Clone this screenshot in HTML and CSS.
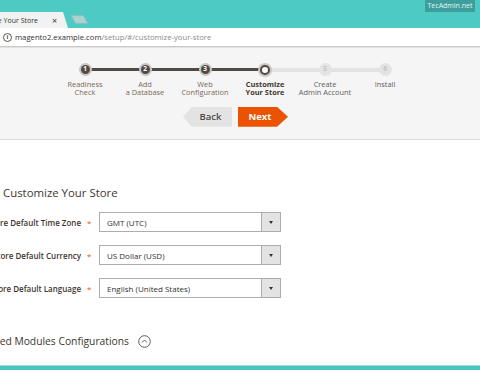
FILE: index.html
```html
<!DOCTYPE html>
<html>
<head>
<meta charset="utf-8">
<link rel="stylesheet" href="styles.css">
</head>
<body>
<div class="tabstrip">
  <div class="tab">
    <div class="tab-title"><span>Customize Your Store</span></div>
    <span class="tab-close">×</span>
  </div>
  <div class="newtab"></div>
  <div class="badge">TecAdmin.net</div>
</div>
<div class="omnibox">
  <span class="info-icon">i</span>
  <span class="url"><span class="host">magento2.example.com</span><span class="path">/setup/#/customize-your-store</span></span>
</div>
<div class="setup-header">
  <ol class="steps">
    <li class="step done"><span class="dot">1</span><span class="label">Readiness<br>Check</span></li>
    <li class="step done"><span class="dot">2</span><span class="label">Add<br>a Database</span></li>
    <li class="step done"><span class="dot">3</span><span class="label">Web<br>Configuration</span></li>
    <li class="step current"><span class="dot"></span><span class="label">Customize<br>Your Store</span></li>
    <li class="step todo"><span class="dot">5</span><span class="label">Create<br>Admin Account</span></li>
    <li class="step todo"><span class="dot">6</span><span class="label">Install</span></li>
  </ol>
  <div class="nav-buttons">
    <button class="btn-back">Back</button>
    <button class="btn-next">Next</button>
  </div>
</div>
<div class="content">
  <h2 class="page-title">Customize Your Store</h2>
  <div class="form-row">
    <div class="label-cell"><span>Store Default Time Zone</span></div>
    <span class="req">*</span>
    <div class="select"><span class="value">GMT (UTC)</span><span class="arrow"></span></div>
  </div>
  <div class="form-row">
    <div class="label-cell"><span>Store Default Currency</span></div>
    <span class="req">*</span>
    <div class="select"><span class="value">US Dollar (USD)</span><span class="arrow"></span></div>
  </div>
  <div class="form-row">
    <div class="label-cell"><span>Store Default Language</span></div>
    <span class="req">*</span>
    <div class="select"><span class="value">English (United States)</span><span class="arrow"></span></div>
  </div>
  <div class="modules">
    <div class="modules-title"><span>Advanced Modules Configurations</span></div>
    <span class="toggle">
      <svg width="13" height="13" viewBox="0 0 13 13"><circle cx="6.5" cy="6.5" r="5.8" fill="none" stroke="#514943" stroke-width="0.9"/><path d="M4 7.5 L6.5 5 L9 7.5" fill="none" stroke="#514943" stroke-width="0.9"/></svg>
    </span>
  </div>
</div>
<div class="footer-bar"></div>
</body>
</html>
```
FILE: styles.css
```css
* { box-sizing: border-box; }
html, body { margin: 0; padding: 0; }
body {
  width: 480px;
  height: 370px;
  overflow: hidden;
  display: flex;
  flex-direction: column;
  font-family: "Open Sans", "Noto Sans", sans-serif;
  background: #fff;
  color: #41362f;
}

/* browser chrome */
.tabstrip {
  position: relative;
  height: 28px;
  flex: none;
  background: #4ecac5;
  display: flex;
  align-items: flex-end;
}
.tab {
  width: 68px;
  height: 16px;
  background: #f2f2f2;
  clip-path: polygon(0 0, 63px 0, 68px 100%, 0 100%);
  display: flex;
  align-items: center;
}
.tab-title {
  width: 38px;
  display: flex;
  justify-content: flex-end;
  overflow: visible;
  white-space: nowrap;
  font-size: 7px;
  color: #333;
}
.tab-close {
  margin-left: 14px;
  font-size: 9px;
  line-height: 1;
  color: #333;
}
.newtab {
  width: 13px;
  height: 9px;
  margin: 0 0 4px 5px;
  background: #a9d4d2;
  border: 1px solid #8bbfbc;
  transform: skewX(29deg);
}
.badge {
  position: absolute;
  top: 0;
  right: 5px;
  width: 50px;
  height: 12px;
  background: #3c9f9b;
  color: #e6f4f3;
  font-size: 7px;
  line-height: 12px;
  text-align: center;
}
.omnibox {
  flex: none;
  height: 19px;
  background: #fff;
  border-bottom: 1px solid #c9c9c9;
  display: flex;
  align-items: center;
  padding-left: 3px;
}
.info-icon {
  width: 9px;
  height: 9px;
  border: 1px solid #555;
  border-radius: 50%;
  font-size: 6px;
  line-height: 7px;
  text-align: center;
  color: #444;
  font-weight: 700;
}
.url {
  margin-left: 3px;
  font-size: 7.7px;
  white-space: nowrap;
}
.host { color: #333; }
.path { color: #8a8a8a; }

/* setup header */
.setup-header {
  flex: none;
  height: 93px;
  background: #f5f5f5;
  border-top: 1px solid #e2e2e2;
  border-bottom: 1px solid #dcdcdc;
  padding-top: 15px;
}
.steps {
  list-style: none;
  margin: 0 0 0 55px;
  padding: 0;
  display: flex;
}
.step {
  position: relative;
  width: 60px;
  display: flex;
  flex-direction: column;
  align-items: center;
}
.step + .step::before {
  content: "";
  position: absolute;
  top: 5px;
  left: -30px;
  width: 60px;
  height: 3px;
  background: #514943;
  z-index: 0;
}
.step.todo::before {
  top: 4.5px;
  height: 4px;
  background: #e3e3e3;
}
.dot {
  position: relative;
  z-index: 1;
  width: 13px;
  height: 13px;
  border-radius: 50%;
  display: flex;
  align-items: center;
  justify-content: center;
  font-size: 6.5px;
  font-weight: 700;
  line-height: 1;
}
.done .dot {
  background: #514943;
  color: #fff;
  box-shadow: 0 0 0 2px #c9c6c4;
  width: 9px;
  height: 9px;
  margin: 2px 0;
}
.current .dot {
  width: 10px;
  height: 10px;
  margin: 1.5px 0;
  background: #fff;
  border: 2.5px solid #514943;
  box-shadow: 0 0 0 2px #c9c6c4;
}
.todo .dot {
  background: #e3e3e3;
  color: #c4c4c4;
}
.label {
  margin-top: 4px;
  font-size: 7.4px;
  line-height: 8.4px;
  text-align: center;
  color: #7a6858;
  white-space: nowrap;
}
.current .label {
  color: #41362f;
  font-weight: 700;
}
.todo .label { color: #5e5e5e; }

.nav-buttons {
  margin-top: 10px;
  display: flex;
  justify-content: center;
  gap: 6px;
  padding-right: 9px;
}
.nav-buttons button {
  font-family: "Open Sans", sans-serif;
  font-size: 9.5px;
  font-weight: 600;
  height: 20px;
  border: 0;
  padding: 0;
  cursor: pointer;
}
.btn-back {
  width: 49px;
  padding-left: 6px !important;
  background: #e3e3e3;
  color: #514943;
  clip-path: polygon(9px 0, 100% 0, 100% 100%, 9px 100%, 0 50%);
}
.btn-next {
  width: 50px;
  padding-right: 6px !important;
  background: #eb5202;
  color: #fff;
  font-weight: 700 !important;
  clip-path: polygon(0 0, 39px 0, 100% 50%, 39px 100%, 0 100%);
}

/* content */
.content {
  flex: 1;
  padding-top: 45px;
}
.page-title {
  margin: 0 0 11px 3px;
  font-size: 11.4px;
  line-height: 16px;
  font-weight: 400;
  color: #41362f;
}
.form-row {
  display: grid;
  grid-template-columns: 81px 18px 182px;
  align-items: center;
  height: 20px;
  margin-bottom: 13px;
}
.label-cell {
  display: flex;
  justify-content: flex-end;
  white-space: nowrap;
  font-size: 8px;
  font-weight: 600;
  color: #41362f;
}
.req {
  color: #eb5202;
  font-size: 8px;
  padding-left: 6px;
}
.select {
  height: 20px;
  border: 1px solid #adadad;
  display: flex;
  align-items: center;
  background: #fff;
}
.value {
  flex: 1;
  padding-left: 7px;
  font-size: 8px;
  color: #303030;
}
.arrow {
  width: 19px;
  height: 100%;
  background: #e3e3e3;
  border-left: 1px solid #adadad;
  display: flex;
  align-items: center;
  justify-content: center;
}
.arrow::after {
  content: "";
  border-left: 2.5px solid transparent;
  border-right: 2.5px solid transparent;
  border-top: 3px solid #333;
}
.modules {
  margin-top: 36px;
  display: flex;
  align-items: center;
  gap: 9px;
}
.modules-title {
  width: 129px;
  display: flex;
  justify-content: flex-end;
  white-space: nowrap;
  font-size: 10.3px;
  line-height: 14px;
  color: #41362f;
}
.toggle { display: flex; }

.footer-bar {
  flex: none;
  height: 5px;
  background: #4ac6c1;
  border-top: 1px solid #9fdcd9;
}
```
